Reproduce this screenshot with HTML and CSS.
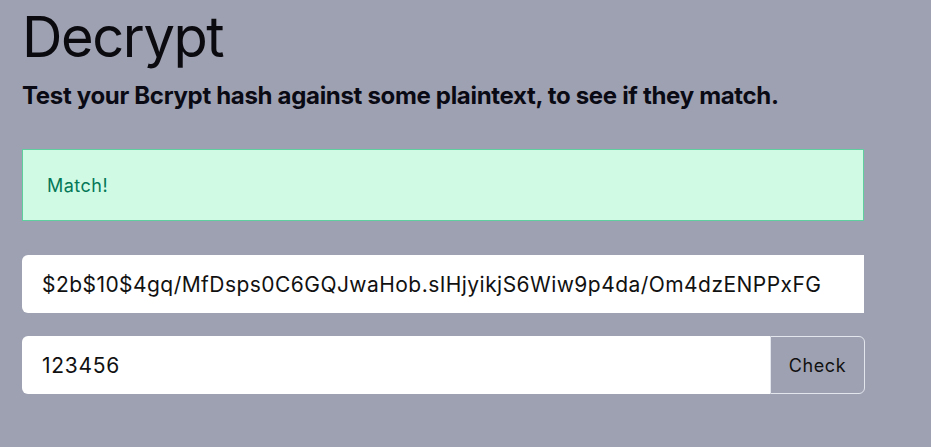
FILE: index.html
```html
<!DOCTYPE html>
<html lang="en">
<head>
<meta charset="utf-8">
<title>Decrypt</title>
<link rel="stylesheet" href="styles.css">
</head>
<body>
<main class="page">
  <h1 class="title">Decrypt</h1>
  <p class="subtitle">Test your Bcrypt hash against some plaintext, to see if they match.</p>
  <div class="alert">Match!</div>
  <div class="field hash-field">$2b$10$4gq/MfDsps0C6GQJwaHob.sIHjyikjS6Wiw9p4da/Om4dzENPPxFG</div>
  <div class="group">
    <div class="field plain-field">123456</div>
    <button class="check">Check</button>
  </div>
</main>
</body>
</html>
```
FILE: styles.css
```css
html, body {
  margin: 0;
  padding: 0;
  background: #9ea1b1;
  font-family: Inter, "Noto Sans", sans-serif;
  color: #000;
}
.page {
  width: 842px;
  padding: 0 0 0 22px;
  display: flex;
  flex-direction: column;
}
.title {
  font-size: 56px;
  font-weight: 400;
  line-height: 56px;
  margin: 9px 0 0 0;
  letter-spacing: -1.4px;
  color: #0a0a0f;
}
.subtitle {
  font-size: 24px;
  font-weight: 700;
  line-height: 32px;
  margin: 15px 0 0 0;
  letter-spacing: -0.32px;
  color: #0a0a14;
}
.alert {
  margin-top: 37px;
  box-sizing: border-box;
  height: 72px;
  border: 1px solid #5fcf9f;
  background: #d1fae5;
  color: #047857;
  font-size: 18px;
  letter-spacing: 0.5px;
  padding: 0 24px;
  display: flex;
  align-items: center;
}
.field {
  background: #fff;
  height: 58px;
  box-sizing: border-box;
  padding: 0 20px;
  display: flex;
  align-items: center;
  font-size: 21px;
  letter-spacing: 0.45px;
  color: #111;
}
.hash-field {
  margin-top: 34px;
  border-radius: 6px 0 0 6px;
}
.group {
  margin-top: 23px;
  margin-right: -1px;
  display: flex;
  height: 58px;
}
.plain-field {
  flex: 1;
  border-radius: 6px 0 0 6px;
  letter-spacing: 0.7px;
}
.check {
  width: 95px;
  box-sizing: border-box;
  background: #9ea1b1;
  border: 1px solid #e4e6ee;
  border-radius: 0 6px 6px 0;
  font-family: Inter, "Noto Sans", sans-serif;
  font-size: 18px;
  letter-spacing: 0.6px;
  color: #111;
  padding: 0;
}
```
